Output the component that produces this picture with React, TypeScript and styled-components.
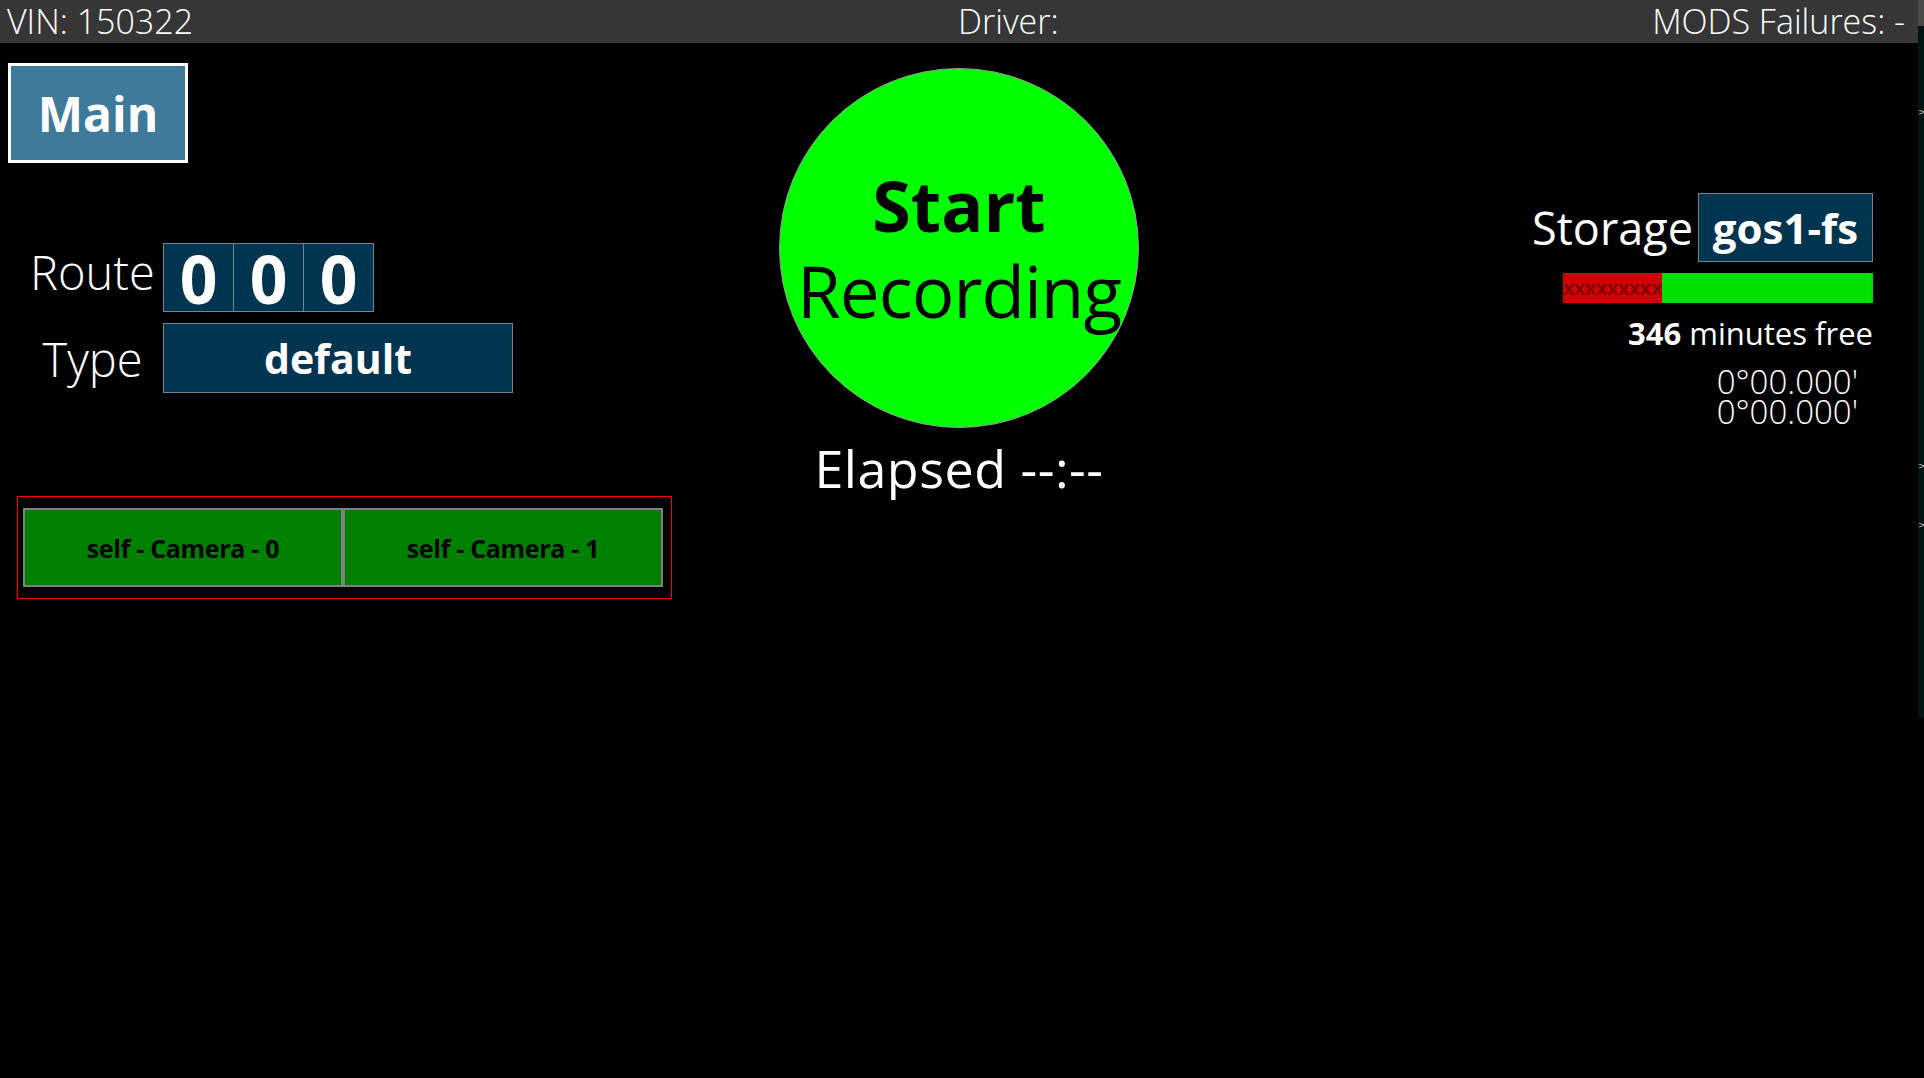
import React from 'react';
import styled, { createGlobalStyle } from 'styled-components';

const font = `'Open Sans', 'Noto Sans', 'Liberation Sans', sans-serif`;

const GlobalStyle = createGlobalStyle`
  html, body {
    margin: 0;
    padding: 0;
    background: #000;
    overflow: hidden;
  }
  body {
    font-family: ${font};
    color: #fff;
  }
`;

const Page = styled.div`
  display: flex;
  width: 1924px;
  height: 1078px;
  background: #000;
`;

const Screen = styled.div`
  flex: 1;
  display: flex;
  flex-direction: column;
  min-width: 0;
`;

const TopBar = styled.div`
  display: grid;
  grid-template-columns: 951px 1fr auto;
  align-items: center;
  height: 43px;
  padding: 0 13px 0 7px;
  background: #363636;
  font-size: 34px;
  font-weight: 300;
  line-height: 43px;
  white-space: nowrap;
`;

const BarText = styled.span``;

const Body = styled.div`
  display: grid;
  grid-template-columns: 1fr auto 1fr;
  align-items: start;
`;

const LeftPanel = styled.div`
  display: flex;
  flex-direction: column;
  align-items: flex-start;
  padding: 20px 0 0 8px;
`;

const MainButton = styled.button`
  width: 180px;
  height: 100px;
  padding: 0;
  border: 3px solid #fff;
  background: #3e7b9b;
  color: #fff;
  font-family: ${font};
  font-size: 48px;
  font-weight: 700;
`;

const FieldRow = styled.div<{ $gap: number }>`
  display: flex;
  align-items: center;
  margin-top: ${({ $gap }) => $gap}px;
`;

const FieldLabel = styled.div<{ $shift: number }>`
  width: 141px;
  margin-left: 14px;
  text-align: center;
  font-size: 47px;
  font-weight: 300;
  transform: translateY(${({ $shift }) => $shift}px);
`;

const DigitGroup = styled.div`
  display: flex;
  border-left: 1px solid #6f8798;
`;

const Digit = styled.div`
  width: 69px;
  height: 67px;
  display: flex;
  align-items: center;
  justify-content: center;
  background: #01344f;
  border: 1px solid #6f8798;
  border-left: none;
  font-size: 66px;
  font-weight: 700;
  line-height: 1;
`;

const TypeBox = styled.div`
  width: 348px;
  height: 68px;
  display: flex;
  align-items: center;
  justify-content: center;
  background: #01344f;
  border: 1px solid #6f8798;
  font-size: 41px;
  font-weight: 700;
`;

const CameraFrame = styled.div`
  display: flex;
  margin: 103px 0 0 9px;
  padding: 11px 8px 11px 5px;
  border: 1px solid #ff0000;
`;

const CameraButton = styled.button`
  width: 320px;
  height: 79px;
  padding: 0;
  background: #008000;
  border: 2px solid #808080;
  color: #000;
  font-family: ${font};
  font-size: 25px;
  font-weight: 700;
  letter-spacing: -0.3px;
`;

const CenterPanel = styled.div`
  display: flex;
  flex-direction: column;
  align-items: center;
  padding-top: 25px;
`;

const RecordCircle = styled.button`
  width: 360px;
  height: 360px;
  padding: 0;
  border-radius: 50%;
  border: 1px solid #999;
  background: #00ff00;
  color: #000;
  font-family: ${font};
  display: flex;
  flex-direction: column;
  align-items: center;
  justify-content: center;
`;

const CircleLine = styled.span<{ $bold?: boolean }>`
  font-size: ${({ $bold }) => ($bold ? 70 : 71)}px;
  font-weight: ${({ $bold }) => ($bold ? 700 : 400)};
  line-height: 85px;
  letter-spacing: ${({ $bold }) => ($bold ? '0' : '-1px')};
`;

const Elapsed = styled.div`
  margin-top: 10px;
  font-size: 52px;
  line-height: 60px;
  font-weight: 400;
  letter-spacing: 0.5px;
`;

const RightPanel = styled.div`
  display: flex;
  flex-direction: column;
  align-items: flex-end;
  padding: 150px 45px 0 0;
`;

const StorageRow = styled.div`
  display: flex;
  align-items: center;
  gap: 5px;
`;

const StorageLabel = styled.span`
  font-size: 45px;
  font-weight: 400;
`;

const StorageBox = styled.div`
  width: 173px;
  height: 67px;
  display: flex;
  align-items: center;
  justify-content: center;
  background: #01344f;
  border: 1px solid #6f8798;
  font-size: 42px;
  font-weight: 700;
`;

const UsageBar = styled.div`
  display: flex;
  width: 310px;
  height: 30px;
  margin-top: 11px;
  background: #00e000;
`;

const UsedPart = styled.div`
  height: 100%;
  overflow: hidden;
  background: #d00000;
  color: #7a0000;
  font-size: 20px;
  font-weight: 600;
  line-height: 30px;
  white-space: nowrap;
`;

const FreeText = styled.div`
  margin-top: 10px;
  font-size: 31px;
  line-height: 40px;
  b {
    font-weight: 700;
  }
`;

const Coords = styled.div`
  margin: 14px 15px 0 0;
  font-size: 33px;
  font-weight: 300;
  line-height: 30px;
  text-align: right;
`;

const SideStrip = styled.div`
  width: 6px;
  display: flex;
  flex-direction: column;
`;

const StripCap = styled.div`
  height: 26px;
  background: #4a4a4a;
`;

const StripTrack = styled.div`
  height: 692px;
  background: #001414;
  color: #c8c8c8;
  font-family: 'DejaVu Sans', sans-serif;
  font-size: 9px;
  line-height: 12px;
  display: flex;
  flex-direction: column;
  overflow: hidden;
`;

const Chevron = styled.span<{ $top: number }>`
  margin-top: ${({ $top }) => $top}px;
  margin-left: 0;
`;

const route = ['0', '0', '0'];
const cameras = ['self - Camera - 0', 'self - Camera - 1'];
const usedPct = 32;

export default function App() {
  return (
    <Page>
      <GlobalStyle />
      <Screen>
        <TopBar>
          <BarText>VIN: 150322</BarText>
          <BarText>Driver:</BarText>
          <BarText>MODS Failures: -</BarText>
        </TopBar>
        <Body>
          <LeftPanel>
            <MainButton>Main</MainButton>
            <FieldRow $gap={80}>
              <FieldLabel $shift={-6}>Route</FieldLabel>
              <DigitGroup>
                {route.map((d, i) => (
                  <Digit key={i}>{d}</Digit>
                ))}
              </DigitGroup>
            </FieldRow>
            <FieldRow $gap={11}>
              <FieldLabel $shift={1}>Type</FieldLabel>
              <TypeBox>default</TypeBox>
            </FieldRow>
            <CameraFrame>
              {cameras.map((c) => (
                <CameraButton key={c}>{c}</CameraButton>
              ))}
            </CameraFrame>
          </LeftPanel>
          <CenterPanel>
            <RecordCircle>
              <CircleLine $bold>Start</CircleLine>
              <CircleLine>Recording</CircleLine>
            </RecordCircle>
            <Elapsed>Elapsed --:--</Elapsed>
          </CenterPanel>
          <RightPanel>
            <StorageRow>
              <StorageLabel>Storage</StorageLabel>
              <StorageBox>gos1-fs</StorageBox>
            </StorageRow>
            <UsageBar>
              <UsedPart style={{ width: `${usedPct}%` }}>xxxxxxxxxx</UsedPart>
            </UsageBar>
            <FreeText>
              <b>346</b> minutes free
            </FreeText>
            <Coords>
              0°00.000'
              <br />
              0°00.000'
            </Coords>
          </RightPanel>
        </Body>
      </Screen>
      <SideStrip>
        <StripCap />
        <StripTrack>
          <Chevron $top={80}>&gt;</Chevron>
          <Chevron $top={342}>&gt;</Chevron>
          <Chevron $top={47}>&gt;</Chevron>
        </StripTrack>
      </SideStrip>
    </Page>
  );
}
